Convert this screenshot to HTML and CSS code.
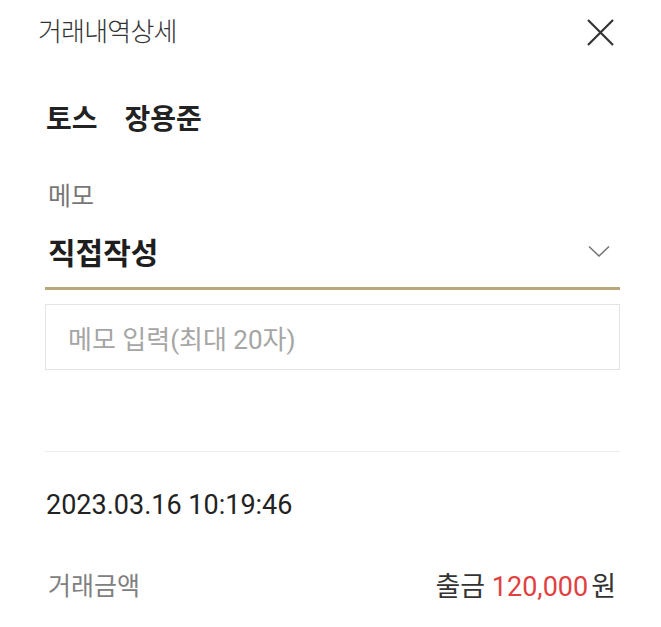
FILE: index.html
```html
<!DOCTYPE html>
<html>
  <head>
    <meta charset="utf-8">
    <link rel="stylesheet" href="styles.css">
  </head>
  <body>
    <div class="header">
      <div class="title">거래내역상세</div>
      <svg class="close" width="27" height="27" viewBox="0 0 27 27">
        <path d="M1 1 L26 26 M26 1 L1 26" stroke="#333" stroke-width="2.2" fill="none"/>
      </svg>
    </div>
    <div class="content">
      <div class="name"><span class="bank">토스</span><span>장용준</span></div>
      <div class="label">메모</div>
      <div class="select">
        <span>직접작성</span>
        <svg class="chevron" width="22" height="13" viewBox="0 0 22 13">
          <path d="M1 1.5 L11 11 L21 1.5" stroke="#777" stroke-width="1.6" fill="none"/>
        </svg>
      </div>
      <div class="memo-input">메모 입력(최대 20자)</div>
      <div class="divider"></div>
      <div class="date">2023.03.16 10:19:46</div>
      <div class="amount-row">
        <span class="amount-label">거래금액</span>
        <span class="amount"><span class="kind">출금</span> <span class="won">120,000</span><span class="unit">원</span></span>
      </div>
    </div>
  </body>
</html>
```

FILE: styles.css
```css
body {
    margin: 0;
    background: #fff;
    font-family: Roboto, "Noto Sans CJK KR", sans-serif;
    color: #222;
}

.header {
    height: 64px;
    display: flex;
    align-items: center;
    justify-content: space-between;
    padding: 0 47px 0 38px;
}

.title {
    font-size: 26px;
    line-height: 30px;
    font-weight: 300;
    color: #333;
    letter-spacing: -0.8px;
}

.close {
    display: block;
}

.content {
    padding: 0 41px 0 45px;
}

.name {
    margin-top: 36px;
    font-size: 28px;
    line-height: 40px;
    font-weight: 700;
    color: #222;
    padding-left: 1px;
}

.bank {
    margin-right: 27px;
}

.label {
    margin-top: 42px;
    font-size: 25px;
    line-height: 30px;
    color: #777;
    padding-left: 3px;
}

.select {
    margin-top: 17px;
    display: flex;
    align-items: center;
    justify-content: space-between;
    height: 44px;
    padding: 0 10px 14px 3px;
    border-bottom: 3px solid #b9a679;
    font-size: 30px;
    font-weight: 700;
    color: #1e1e1e;
}

.memo-input {
    margin-top: 14px;
    height: 64px;
    border: 1px solid #e3e3e3;
    display: flex;
    align-items: center;
    padding-left: 22px;
    font-size: 26px;
    color: #a5a5a5;
}

.divider {
    margin-top: 81px;
    height: 1px;
    background: #eeeeee;
}

.date {
    margin-top: 38px;
    font-size: 27px;
    line-height: 30px;
    color: #222;
    padding-left: 1px;
}

.amount-row {
    margin-top: 51px;
    display: flex;
    justify-content: space-between;
    align-items: center;
    line-height: 32px;
    padding-right: 4px;
}

.amount-label {
    font-size: 25px;
    color: #808080;
    padding-left: 3px;
}

.amount {
    font-size: 27px;
    color: #333;
}

.won {
    color: #e0413f;
}

.unit {
    margin-left: 3px;
}
```
